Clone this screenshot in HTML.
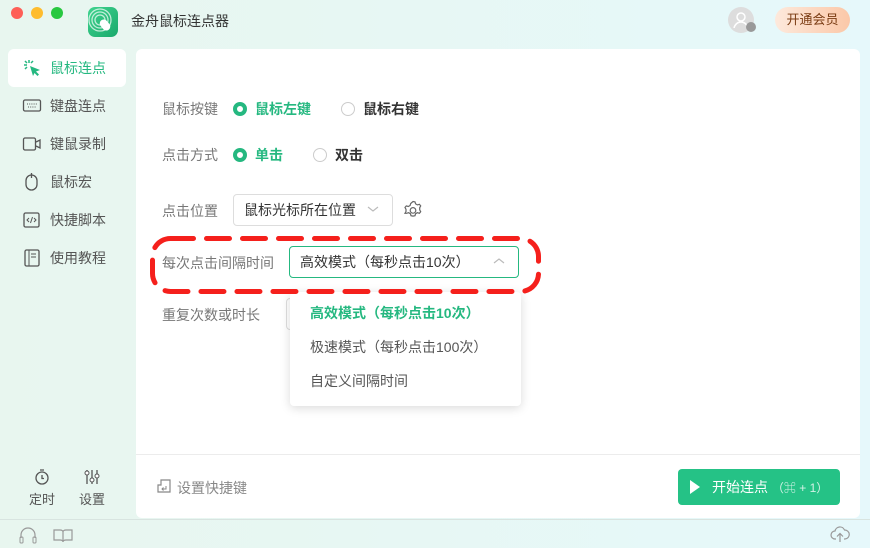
<!DOCTYPE html>
<html><head><meta charset="utf-8"><style>
*{margin:0;padding:0;box-sizing:border-box}
body{width:870px;height:548px;overflow:hidden;font-family:"Liberation Sans","Noto Sans CJK SC",sans-serif;background:linear-gradient(90deg,#e8f6ef 0%,#e7f7f3 40%,#e6f8fb 100%);position:relative;color:#333}
.a{position:absolute}
.dot{width:12px;height:12px;border-radius:50%;top:7px}
.nav{left:8px;width:118px;height:38px;font-size:14px;color:#555;display:flex;align-items:center;padding-left:14px}
.nav svg{margin-right:8px}
.lbl{font-size:14px;color:#777}
.radio{width:14px;height:14px;border-radius:50%}
.on{border:4px solid #25b880;background:#fff}
.off{border:1px solid #ccc;background:#fff}
.g{color:#25b880}
</style></head><body>
<div class="a dot" style="left:11px;background:#fe5f57"></div>
<div class="a dot" style="left:31px;background:#febc2e"></div>
<div class="a dot" style="left:51px;background:#28c840"></div>
<div class="a" style="left:88px;top:7px;width:30px;height:30px;border-radius:7px;background:linear-gradient(135deg,#3fd38e,#1aa96c)">
<svg width="30" height="30"><g fill="none" stroke="#fff" stroke-opacity=".7" stroke-width="1.3"><circle cx="12" cy="13" r="5"/><circle cx="12" cy="13" r="8"/><circle cx="12" cy="13" r="11"/></g><rect x="13" y="12" width="8" height="12" rx="4" transform="rotate(-40 17 18)" fill="#fff"/></svg></div>
<div class="a" style="left:131px;top:11px;font-size:14px;color:#333">金舟鼠标连点器</div>
<div class="a" style="left:728px;top:7px;width:26px;height:26px;border-radius:50%;background:#ddd"><svg width="26" height="26"><circle cx="13" cy="10" r="4" fill="none" stroke="#fff" stroke-width="1.5"/><path d="M6 21c1-4 4-6 7-6s6 2 7 6" fill="none" stroke="#fff" stroke-width="1.5"/></svg></div>
<div class="a" style="left:746px;top:22px;width:10px;height:10px;border-radius:50%;background:#999"></div>
<div class="a" style="left:775px;top:7px;width:75px;height:26px;border-radius:13px;background:linear-gradient(90deg,#fde9dc,#fbc8a8);font-size:13px;color:#7a3b12;text-align:center;line-height:26px">开通会员</div>

<div class="a nav" style="top:49px;background:#fff;border-radius:6px;color:#25b880">
<svg width="20" height="20"><g stroke="#25b880" stroke-width="1.5"><path d="M7 2v3M2 7h3M3 3l2 2M11 3l-2 2M3 11l2-2"/></g><path d="M8 8l10 4-4 1.5 3 3-1.5 1.5-3-3L11 18z" fill="#25b880"/></svg>鼠标连点</div>
<div class="a nav" style="top:87px"><svg width="20" height="20"><rect x="1.5" y="4" width="17" height="11" rx="1.5" fill="none" stroke="#555" stroke-width="1.3"/><path d="M5 8h10M6 11h8" stroke="#555" stroke-dasharray="1 1.2"/></svg>键盘连点</div>
<div class="a nav" style="top:125px"><svg width="20" height="20"><rect x="1.5" y="4" width="12" height="12" rx="1.5" fill="none" stroke="#555" stroke-width="1.3"/><path d="M14 8l4-2v8l-4-2" fill="none" stroke="#555" stroke-width="1.3"/></svg>键鼠录制</div>
<div class="a nav" style="top:163px"><svg width="20" height="20"><rect x="4" y="3" width="11" height="15" rx="5.5" fill="none" stroke="#555" stroke-width="1.3"/><path d="M9.5 1v5" stroke="#555" stroke-width="1.3"/></svg>鼠标宏</div>
<div class="a nav" style="top:201px"><svg width="20" height="20"><rect x="2" y="3" width="15" height="14" rx="1.5" fill="none" stroke="#555" stroke-width="1.3"/><path d="M7 8l-2 2 2 2M12 8l2 2-2 2M10.5 7l-2 6" fill="none" stroke="#555"/></svg>快捷脚本</div>
<div class="a nav" style="top:239px"><svg width="20" height="20"><rect x="3" y="2" width="14" height="16" rx="1.5" fill="none" stroke="#555" stroke-width="1.3"/><path d="M7 2v16M9 6h5M9 9h5" stroke="#555"/></svg>使用教程</div>

<div class="a" style="left:28px;top:468px;width:28px;text-align:center;font-size:13px;color:#555"><svg width="18" height="18"><circle cx="9" cy="10" r="6" fill="none" stroke="#555" stroke-width="1.3"/><path d="M9 7v3.5h2M7 2h4" stroke="#555" stroke-width="1.3" fill="none"/></svg><br>定时</div>
<div class="a" style="left:78px;top:468px;width:28px;text-align:center;font-size:13px;color:#555"><svg width="18" height="18"><path d="M4 2v14M9 2v14M14 2v14" stroke="#555" stroke-width="1.3"/><circle cx="4" cy="5" r="2" fill="#fff" stroke="#555"/><circle cx="9" cy="12" r="2" fill="#fff" stroke="#555"/><circle cx="14" cy="8" r="2" fill="#fff" stroke="#555"/></svg><br>设置</div>

<div class="a" style="left:136px;top:49px;width:724px;height:469px;background:#fff;border-radius:6px"></div>
<div class="a" style="left:136px;top:454px;width:724px;height:1px;background:#ececec"></div>

<div class="a lbl" style="left:162px;top:99px">鼠标按键</div>
<div class="a radio on" style="left:233px;top:102px"></div>
<div class="a g" style="left:255px;top:99px;font-size:14px;font-weight:bold">鼠标左键</div>
<div class="a radio off" style="left:341px;top:102px"></div>
<div class="a" style="left:363px;top:99px;font-size:14px;font-weight:bold;color:#333">鼠标右键</div>

<div class="a lbl" style="left:162px;top:145px">点击方式</div>
<div class="a radio on" style="left:233px;top:148px"></div>
<div class="a g" style="left:255px;top:145px;font-size:14px;font-weight:bold">单击</div>
<div class="a radio off" style="left:313px;top:148px"></div>
<div class="a" style="left:335px;top:145px;font-size:14px;font-weight:bold;color:#333">双击</div>

<div class="a lbl" style="left:162px;top:201px">点击位置</div>
<div class="a" style="left:233px;top:194px;width:160px;height:32px;border:1px solid #ddd;border-radius:4px;font-size:14px;color:#333;padding:5px 10px">鼠标光标所在位置</div>
<svg class="a" style="left:366px;top:204px" width="14" height="10"><path d="M2 3l5 4 5-4" fill="none" stroke="#bbb" stroke-width="1.2"/></svg>
<svg class="a" style="left:403px;top:200px" width="20" height="20"><path d="M10 1.5l2 .4.6 2 1.8 1 2-.6 1.3 1.6-1 1.8v2.2l1 1.8-1.3 1.6-2-.6-1.8 1-.6 2-2 .4-2-.4-.6-2-1.8-1-2 .6L2 13.3l1-1.8V9.3L2 7.5l1.3-1.6 2 .6 1.8-1 .6-2z" fill="none" stroke="#666" stroke-width="1.2"/><circle cx="10" cy="10.4" r="2.8" fill="none" stroke="#666" stroke-width="1.2"/></svg>

<div class="a lbl" style="left:162px;top:253px">每次点击间隔时间</div>
<div class="a" style="left:289px;top:246px;width:230px;height:32px;border:1px solid #25b880;border-radius:4px;font-size:14px;color:#333;padding:5px 10px">高效模式（每秒点击10次）</div>
<svg class="a" style="left:492px;top:256px" width="14" height="10"><path d="M2 7l5-4 5 4" fill="none" stroke="#bbb" stroke-width="1.2"/></svg>

<div class="a lbl" style="left:162px;top:305px">重复次数或时长</div>
<div class="a" style="left:286px;top:298px;width:10px;height:32px;border:1px solid #ddd;border-radius:4px 0 0 4px"></div>

<div class="a" style="left:290px;top:292px;width:231px;height:114px;background:#fff;border-radius:4px;box-shadow:0 2px 10px rgba(0,0,0,.15)">
<div class="a g" style="left:20px;top:11px;font-size:14px;font-weight:bold">高效模式（每秒点击10次）</div>
<div class="a" style="left:20px;top:45px;font-size:14px;color:#555">极速模式（每秒点击100次）</div>
<div class="a" style="left:20px;top:79px;font-size:14px;color:#555">自定义间隔时间</div>
</div>

<svg class="a" style="left:0;top:0" width="870" height="548"><rect x="152.5" y="238.5" width="386" height="53" rx="18" fill="none" stroke="#f5201c" stroke-width="5" stroke-linecap="round" stroke-dasharray="23 13"/></svg>

<svg class="a" style="left:156px;top:478px" width="16" height="16"><path d="M5 2h9v12H2V7h3z" fill="none" stroke="#888" stroke-width="1.2"/><path d="M10 8v3H6M7.5 9.5L6 11l1.5 1.5" fill="none" stroke="#888"/></svg>
<div class="a" style="left:177px;top:478px;font-size:14px;color:#888">设置快捷键</div>
<div class="a" style="left:678px;top:469px;width:162px;height:36px;border-radius:4px;background:#25c286;color:#fff;font-size:14px;line-height:36px;padding-left:34px">开始连点 <span style="font-size:12px;opacity:.8">（⌘ + 1）</span></div>
<svg class="a" style="left:689px;top:479px" width="12" height="16"><path d="M1 1l10 7-10 7z" fill="#fff"/></svg>

<div class="a" style="left:0;top:519px;width:870px;height:1px;background:#d8e4e0"></div>
<svg class="a" style="left:18px;top:527px" width="20" height="18"><path d="M3 11V8a7 7 0 0114 0v3" fill="none" stroke="#999" stroke-width="1.2"/><rect x="2" y="10" width="3" height="6" rx="1" fill="none" stroke="#999"/><rect x="15" y="10" width="3" height="6" rx="1" fill="none" stroke="#999"/></svg>
<svg class="a" style="left:53px;top:528px" width="20" height="16"><path d="M1 2h6c2 0 3 1 3 2v10c0-1-1-2-3-2H1zM19 2h-6c-2 0-3 1-3 2v10c0-1 1-2 3-2h6z" fill="none" stroke="#999" stroke-width="1.2"/></svg>
<svg class="a" style="left:830px;top:524px" width="20" height="20"><path d="M6 15H5a4 4 0 010-8 5 5 0 019.5-1A4 4 0 0115 15h-1M10 18v-8M7 12.5l3-3 3 3" fill="none" stroke="#999" stroke-width="1.2"/></svg>
</body></html>
